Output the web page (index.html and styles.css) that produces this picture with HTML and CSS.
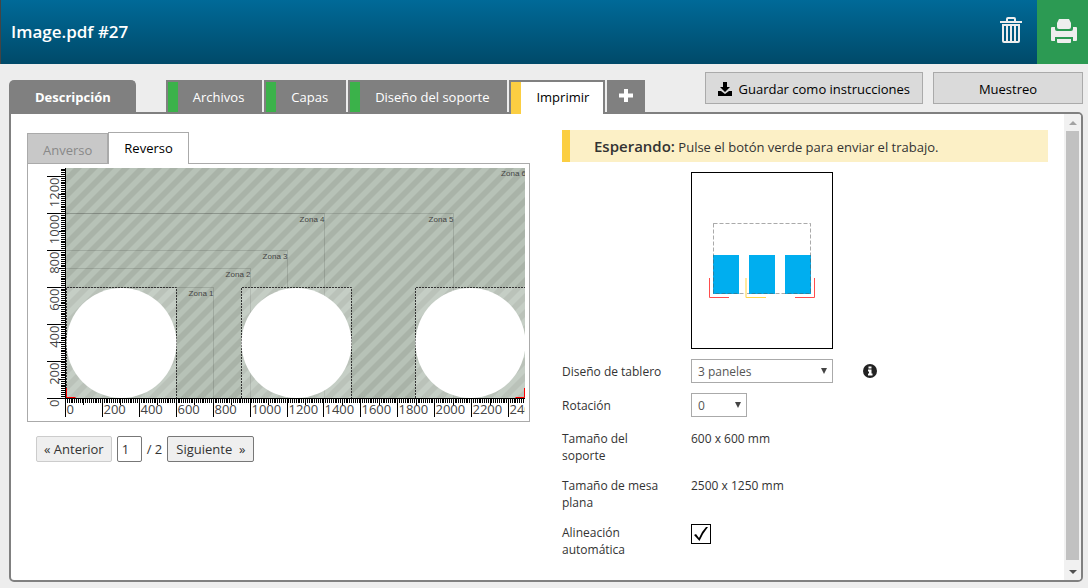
FILE: index.html
```html
<!DOCTYPE html>
<html lang="es">
<head>
    <meta charset="UTF-8">
    <meta name="viewport" content="width=device-width, initial-scale=1.0">
    <title>Image.pdf #27</title>
    <link rel="stylesheet" href="styles.css">
</head>
<body>
    <header class="header">
        <h1 class="title">Image.pdf #27</h1>
        <button class="icon-button" type="button" aria-label="Eliminar">
            <svg width="24" height="28" viewBox="0 0 24 28" fill="none" stroke="#eee">
                <path d="M1 6h22" stroke-width="2"/>
                <path d="M8 5V3q0-1 1-1h6q1 0 1 1v2" stroke-width="2"/>
                <path d="M4 9v16q0 1 1 1h14q1 0 1-1V9z" stroke-width="2"/>
                <path d="M8 10v15M12 10v15M16 10v15" stroke-width="2"/>
            </svg>
        </button>
        <button class="icon-button print" type="button" aria-label="Imprimir">
            <svg width="26" height="26" viewBox="0 0 26 26" fill="#eee">
                <path d="M8 1h10l2 4v4q0 2-2 2H8q-2 0-2-2V5z"/>
                <path d="M1 9h3v2q0 2 2 2h14q2 0 2-2V9h3q1 0 1 1v12q0 1-1 1h-3v-4H4v4H1q-1 0-1-1V10q0-1 1-1z"/>
                <path d="M6 21h14v3q0 1-1 1H7q-1 0-1-1z"/>
            </svg>
        </button>
    </header>

    <div class="toolbar">
        <nav class="tabs">
            <a class="tab tab-main" href="#">Descripción</a>
            <a class="tab done" href="#">Archivos</a>
            <a class="tab done" href="#">Capas</a>
            <a class="tab done" href="#">Diseño del soporte</a>
            <a class="tab active" href="#">Imprimir</a>
            <a class="tab tab-add" href="#" aria-label="Añadir">
                <svg width="14" height="14" viewBox="0 0 14 14"><path d="M7 0v13M0 6.500h14" stroke="#fff" stroke-width="4"/></svg>
            </a>
        </nav>
        <div class="actions">
            <button class="action save" type="button">
                <svg width="14" height="14" viewBox="0 0 14 14"><path d="M5 0h4v5h3L7 10 2 5h3zM0 9h3l4 3 4-3h3v5H0z"/></svg>
                Guardar como instrucciones
            </button>
            <button class="action sample" type="button">Muestreo</button>
        </div>
    </div>

    <main class="panel">
        <div class="content">
            <section class="preview">
                <div class="sides">
                    <button class="side" type="button">Anverso</button>
                    <button class="side current" type="button">Reverso</button>
                </div>
                <div class="canvas">
                    <svg id="table" width="501" height="257" viewBox="28 164 501 257">
                        <defs>
                            <pattern id="stripes" width="16" height="16" patternUnits="userSpaceOnUse" patternTransform="translate(66 168)">
                                <rect width="16" height="16" fill="#b7c2b7"/>
                                <path d="M0 8L8 0H16L0 16zM8 16L16 8V16z" fill="#a9b3a8"/>
                            </pattern>
                            <clipPath id="area"><rect x="66" y="168" width="459" height="230"/></clipPath>
                            <clipPath id="ruler"><rect x="46" y="168" width="479" height="253"/></clipPath>
                        </defs>
                        <g clip-path="url(#area)">
                            <rect x="66" y="168" width="459" height="230" fill="url(#stripes)"/>
                            <g id="zones" class="zones"></g>
                            <g id="sheets"></g>
                            <path d="M66.500 388v9.500h9M524.500 388v9.500h-9" fill="none" stroke="#f00"/>
                        </g>
                        <g id="rulers" class="rulers" clip-path="url(#ruler)"></g>
                    </svg>
                </div>
                <div class="pager">
                    <button class="page-button" type="button" disabled>« Anterior</button>
                    <input class="page-input" type="text" value="1" aria-label="Página">
                    <span>/ 2</span>
                    <button class="page-button next" type="button">Siguiente &nbsp;»</button>
                </div>
            </section>

            <section class="settings">
                <p class="notice"><strong>Esperando:</strong> Pulse el botón verde para enviar el trabajo.</p>
                <svg class="board" width="142" height="177" viewBox="0 0 142 177" fill="none">
                    <rect x=".5" y=".5" width="141" height="176" stroke="#000"/>
                    <path d="M22 83h26v39H22zM58 83h26v39H58zM94 83h26v39H94z" fill="#00aeef"/>
                    <rect x="22.500" y="51.500" width="97" height="70" stroke="#555" stroke-opacity=".5" stroke-dasharray="4 2"/>
                    <path d="M18.500 106v19.500H38M123.500 106v19.500H104" stroke="#ff4d4d"/>
                    <path d="M55 106v19.500" stroke="#ffe9a0" stroke-width="2"/>
                    <path d="M55 125.500h20" stroke="#ffd54a"/>
                </svg>
                <div class="field field-select">
                    <label for="layout">Diseño de tablero</label>
                    <span class="select wide"><select id="layout"><option>3 paneles</option></select></span>
                    <svg class="info" width="14" height="14" viewBox="0 0 14 14">
                        <circle cx="7" cy="7" r="7" fill="#222"/>
                        <path d="M5.500 2.500h3v2h-3zM5 5.500h3.500v4h1v2H5v-2h1v-2H5z" fill="#fff"/>
                    </svg>
                </div>
                <div class="field field-select">
                    <label for="rotation">Rotación</label>
                    <span class="select"><select id="rotation"><option>0</option></select></span>
                </div>
                <div class="field">
                    <span class="name">Tamaño del soporte</span>
                    <span>600 x 600 mm</span>
                </div>
                <div class="field">
                    <span class="name">Tamaño de mesa plana</span>
                    <span>2500 x 1250 mm</span>
                </div>
                <div class="field">
                    <label for="align">Alineación automática</label>
                    <span class="check">
                        <input type="checkbox" id="align" checked>
                        <svg width="20" height="20" viewBox="0 0 20 20"><path d="M3 11l2-1 3 4q3-7 7-11l2 0Q12 9 8.500 17z"/></svg>
                    </span>
                </div>
            </section>
        </div>
        <div class="scrollbar" aria-hidden="true">
            <span class="arrow up"></span>
            <span class="thumb"></span>
            <span class="arrow down"></span>
        </div>
    </main>
    <script src="table.js"></script>
</body>
</html>
```
FILE: styles.css
```css
* {
    box-sizing: border-box;
}

body {
    margin: 0;
    min-height: 100vh;
    display: flex;
    flex-direction: column;
    background: #ededed;
    color: #333;
    font: 13px/20px "Open Sans", "Noto Sans", sans-serif;
}

button,
input,
select {
    font: inherit;
    color: inherit;
}

a {
    text-decoration: none;
}

svg {
    display: block;
}

.header {
    display: flex;
    height: 64px;
    border-left: 1px solid #444;
    background: linear-gradient(#006a98, #004a69);
}

.title {
    flex: 1;
    margin: 0;
    padding-left: 10px;
    color: #fff;
    font-size: 17px;
    font-weight: 600;
    line-height: 64px;
}

.icon-button {
    display: flex;
    align-items: center;
    justify-content: center;
    width: 51px;
    padding: 0 2px 4px 0;
    border: 0;
    background: none;
}

.icon-button.print {
    padding: 0 0 2px 2px;
    background: #2c9a53;
}

.toolbar {
    display: flex;
    justify-content: space-between;
    height: 48px;
    padding: 8px 5px 0 9px;
}

.tabs {
    display: flex;
    gap: 2px;
    padding-top: 8px;
}

.tab {
    height: 32px;
    padding: 0 17px 0 15px;
    border: 2px solid #808080;
    border-bottom: 0;
    background: #808080;
    color: #fff;
    line-height: 30px;
    white-space: nowrap;
}

.tab-main {
    margin-right: 28px;
    padding: 0 23px 0 24px;
    border-radius: 5px 5px 0 0;
    font-weight: 700;
}

.tab.done::before,
.tab.active::before {
    content: "";
    float: left;
    width: 10px;
    height: 100%;
    margin: 0 15px 0 -15px;
    background: #3bb24a;
}

.tab.done {
    padding-right: 16px;
}

.tab.active {
    height: 34px;
    padding-right: 14px;
    background: #fff;
    color: #000;
    position: relative;
    z-index: 1;
}

.tab.active::before {
    background: #fbce42;
}

.tab-add {
    padding: 7px 10px 0;
}

.actions {
    display: flex;
    gap: 10px;
}

.action {
    display: flex;
    align-items: center;
    justify-content: center;
    gap: 6px;
    height: 32px;
    border: 1px solid #aaa;
    background: #dadada;
    color: #000;
    padding: 2px 12px 0;
    white-space: nowrap;
}

.sample {
    width: 150px;
}

.panel {
    flex: 1;
    display: flex;
    margin: 0 5px 6px 9px;
    border: 2px solid #808080;
    border-radius: 0 5px 5px 5px;
    background: #fff;
    overflow: hidden;
}

.content {
    flex: 1;
    display: flex;
    gap: 32px;
    padding: 16px;
}

.preview {
    flex: 0 1 503px;
    min-width: 0;
    padding-top: 2px;
}

.sides {
    display: flex;
    align-items: flex-end;
}

.side {
    height: 30px;
    padding: 2px 15px 0;
    border: 1px solid #aaa;
    border-bottom: 0;
    background: #c8c8c8;
    color: #888;
}

.side.current {
    height: 32px;
    margin-bottom: -1px;
    padding-bottom: 4px;
    background: #fff;
    color: #000;
    z-index: 1;
}

.canvas {
    border: 1px solid #aaa;
}

.canvas svg {
    width: 100%;
    height: auto;
}

.zones text {
    fill: #444;
    font: 8px "Liberation Sans", sans-serif;
    text-anchor: end;
}

.zones path {
    fill: none;
    stroke: #000;
    stroke-opacity: .12;
}

.rulers {
    fill: #444;
}

.rulers path {
    fill: none;
    stroke: #000;
    shape-rendering: crispEdges;
}

.pager {
    display: flex;
    align-items: center;
    gap: 5px;
    padding: 14px 0 0 9px;
}

.page-button {
    height: 26px;
    padding: 0 7px;
    border: 1px solid #777;
    border-radius: 2px;
    background: #efefef;
}

.page-button:disabled {
    border-color: #ccc;
    color: #333;
}

.page-button.next {
    padding: 0 8px;
}

.page-input {
    width: 25px;
    height: 26px;
    padding: 0 4px;
    border: 1px solid #777;
    border-radius: 2px;
}

.settings {
    flex: 1;
}

.notice {
    margin: 0 0 10px;
    padding: 0 24px;
    border-left: 8px solid #fbce42;
    background: #fcf0c6;
    line-height: 33px;
    height: 32px;
}

.notice strong {
    font-size: 15px;
    font-weight: 600;
}

.board {
    margin: 0 0 5px 129px;
}

.field {
    display: flex;
    padding: 8px 0 5px;
    font-size: 12px;
    line-height: 17px;
}

.field label,
.field .name {
    width: 129px;
    padding-right: 20px;
}

.field-select {
    align-items: center;
    height: 34px;
    padding: 0;
}

.select {
    position: relative;
    width: 56px;
}

.select.wide {
    width: 142px;
}

.select select {
    display: block;
    width: 100%;
    height: 24px;
    padding: 1px 6px 0;
    border: 1px solid #aaa;
    border-radius: 0;
    background: #fff;
    color: #555;
    appearance: none;
}

.select::after {
    content: "";
    position: absolute;
    top: 9px;
    right: 6px;
    border: 3px solid transparent;
    border-top: 6px solid #444;
    border-bottom: 0;
    pointer-events: none;
}

.info {
    margin-left: 30px;
}

.check {
    position: relative;
    width: 20px;
    height: 20px;
}

.check input {
    display: block;
    width: 20px;
    height: 20px;
    margin: 0;
    border: 1px solid #000;
    background: #fff;
    appearance: none;
}

.check svg {
    position: absolute;
    top: 0;
    left: 0;
    visibility: hidden;
    pointer-events: none;
}

.check input:checked + svg {
    visibility: visible;
}

.scrollbar {
    display: flex;
    flex-direction: column;
    align-items: center;
    width: 17px;
    background: #f1f1f1;
}

.arrow {
    width: 8px;
    height: 4px;
    margin: 7px 0 6px;
    border: 4px solid transparent;
    border-top: 0;
    border-bottom-color: #a3a3a3;
}

.arrow.down {
    border-top: 4px solid #505050;
    border-bottom: 0;
}

.thumb {
    flex: 1;
    width: 13px;
    margin-bottom: 3px;
    background: #c1c1c1;
}
```
FILE: table.js
```js
// table size in mm is scaled down to drawing units
const scale = 0.1846;
const left = 66;
const bottom = 398;

const zones = [
    [800, 600],
    [1000, 700],
    [1200, 800],
    [1400, 1000],
    [2100, 1000],
    [2500, 1250]
];
const sheets = [0, 950, 1895];

const px = mm => left + mm * scale;
const py = mm => bottom - mm * scale;
const snap = n => Math.floor(n) + 0.5;

document.getElementById('sheets').innerHTML = sheets.map(x => {
    const x1 = snap(px(x)) - 0.5;
    return `<rect x="${x1}" y="288" width="110" height="110" fill="#fff" fill-opacity=".2"/>
        <path d="M${x1 + 0.5} 398V287.500H${x1 + 110.5}V398" fill="none" stroke="#333" stroke-dasharray="2 1"/>
        <circle cx="${x1 + 55.5}" cy="343" r="55" fill="#fff"/>`;
}).join('');

document.getElementById('zones').innerHTML = zones.map(([w, h], i) => {
    const x = snap(px(w));
    const y = snap(py(h));
    const textX = Math.min(x, 526);
    const textY = Math.max(y, 167.5) + 8;
    return `<path d="M66 ${y}H${x}V398"/><text x="${textX}" y="${textY}">Zona ${i + 1}</text>`;
}).join('');

let ticks = '';
let labels = '';
for (let mm = 0; mm <= 2490; mm += 10) {
    const size = mm % 200 === 0 ? 19 : mm % 100 === 0 ? 7 : 5;
    const x = snap(px(mm) - 0.5);
    ticks += `M${x} 398v${size}`;
    if (mm <= 1240) {
        ticks += `M66 ${snap(py(mm))}h${-size}`;
    }
    if (mm % 200 === 0) {
        labels += `<text x="${x + 1}" y="414">${mm}</text>`;
        if (mm <= 1200) {
            const y = snap(py(mm)) + 1;
            labels += `<text transform="translate(59 ${y}) rotate(-90)" text-anchor="end">${mm}</text>`;
        }
    }
}
document.getElementById('rulers').innerHTML =
    `<path d="${ticks}M65.500 168V398.500H525"/>${labels}`;
```
